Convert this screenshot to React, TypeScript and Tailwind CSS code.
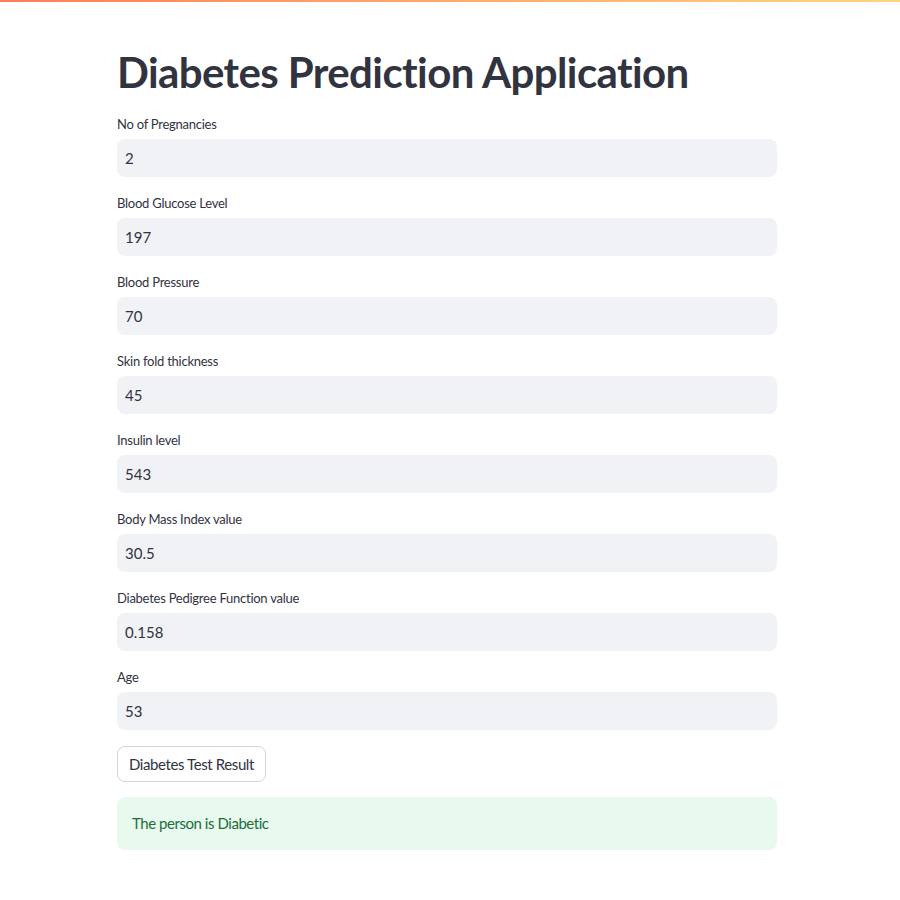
import React from "react";

const fields: [string, string][] = [
  ["No of Pregnancies", "2"],
  ["Blood Glucose Level", "197"],
  ["Blood Pressure", "70"],
  ["Skin fold thickness", "45"],
  ["Insulin level", "543"],
  ["Body Mass Index value", "30.5"],
  ["Diabetes Pedigree Function value", "0.158"],
  ["Age", "53"],
];

export default function App() {
  return (
    <div
      className="min-h-[900px] w-[900px] bg-white text-[#31333f]"
      style={{ fontFamily: "Lato, 'Noto Sans', sans-serif" }}
    >
      <div className="h-[2px] w-full bg-gradient-to-r from-[#ff7b5f] to-[#ffd57c]" />
      <div className="ml-[117px] w-[660px] pt-[44px]">
        <h1 className="text-[42px] font-bold leading-[53px] tracking-[-0.6px] text-[#31333f]">
          Diabetes Prediction Application
        </h1>
        <div className="mt-[15px] flex flex-col gap-[16px]">
          {fields.map(([label, value]) => (
            <div key={label} className="flex flex-col">
              <div className="flex h-[21px] items-center text-[13px] tracking-[-0.25px] text-[#31333f]">{label}</div>
              <div className="mt-[4px] flex h-[38px] items-center rounded-[8px] bg-[#f0f2f6] pl-[8px] text-[15px] text-[#31333f]">
                {value}
              </div>
            </div>
          ))}
        </div>
        <div className="mt-[16px]">
          <button className="h-[36px] rounded-[8px] border border-[#d4d5d9] bg-white px-[11px] text-[15px] tracking-[-0.4px] text-[#31333f]">
            Diabetes Test Result
          </button>
        </div>
        <div className="mt-[15px] flex h-[53px] items-center rounded-[8px] bg-[#e8f9ee] px-[15px] text-[15px] tracking-[-0.45px] text-[#1b6e3a]">
          The person is Diabetic
        </div>
      </div>
    </div>
  );
}
